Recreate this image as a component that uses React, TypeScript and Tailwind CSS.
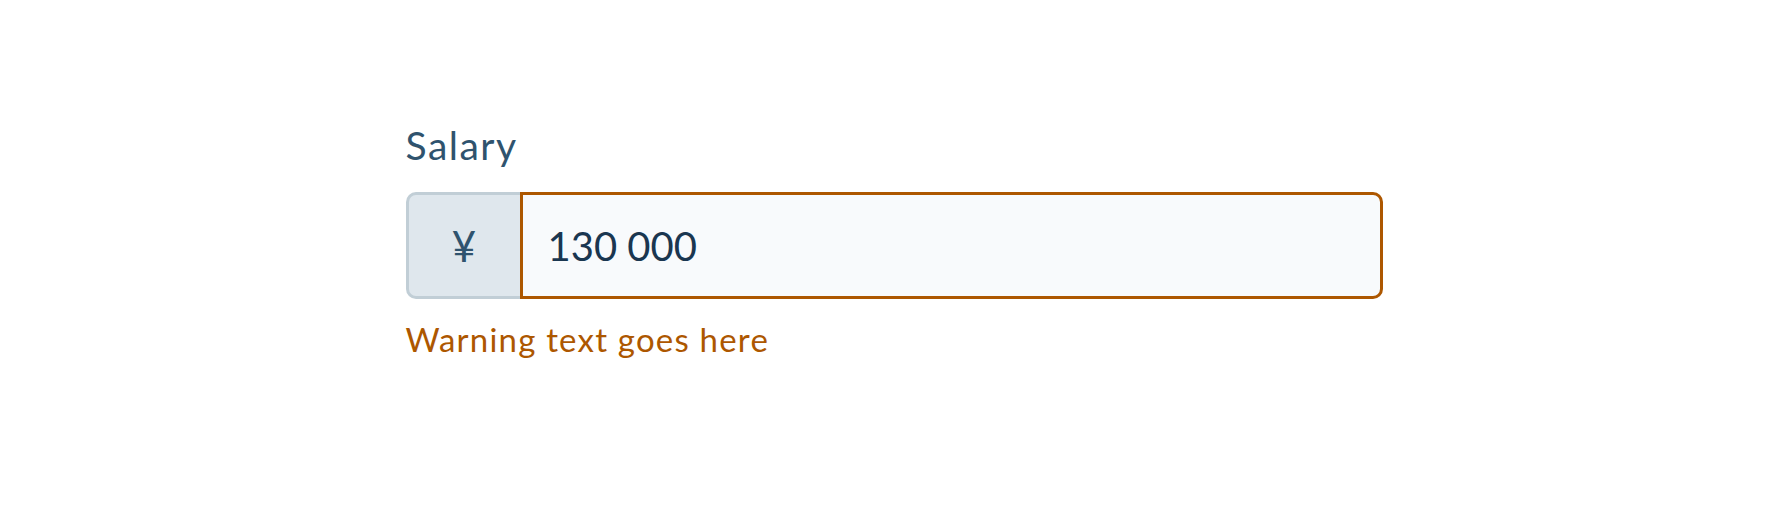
import React from 'react';

const App = () => {
    const [value, setValue] = React.useState('130 000');

    return (
        <div className="w-[1788px] h-[516px] bg-white font-['Lato',sans-serif]">
            <div className="mx-auto w-[977px] pt-[122px]">
                <label htmlFor="salary" className="block text-[39px] leading-[47px] tracking-[1.5px] text-[#2f536e] mb-[23px]">
                    Salary
                </label>
                <div className="flex h-[107px]">
                    <div className="flex w-[114px] items-center justify-center rounded-l-[10px] border-[3px] border-r-0 border-[#c1ced6] bg-[#dfe7ed] text-[42px] leading-[50px] text-[#2f536e]">
                        ¥
                    </div>
                    <input
                        id="salary"
                        value={value}
                        onChange={e => setValue(e.target.value)}
                        className="flex-1 min-w-0 rounded-r-[10px] border-[3px] border-[#ad5700] bg-[#f8fafc] pl-[25px] text-[40px] leading-[48px] text-[#1a3650] outline-none"
                    />
                </div>
                <p className="mt-[20px] text-[33px] leading-[40px] tracking-[1.2px] text-[#ad5700]">Warning text goes here</p>
            </div>
        </div>
    );
};

export default App;
